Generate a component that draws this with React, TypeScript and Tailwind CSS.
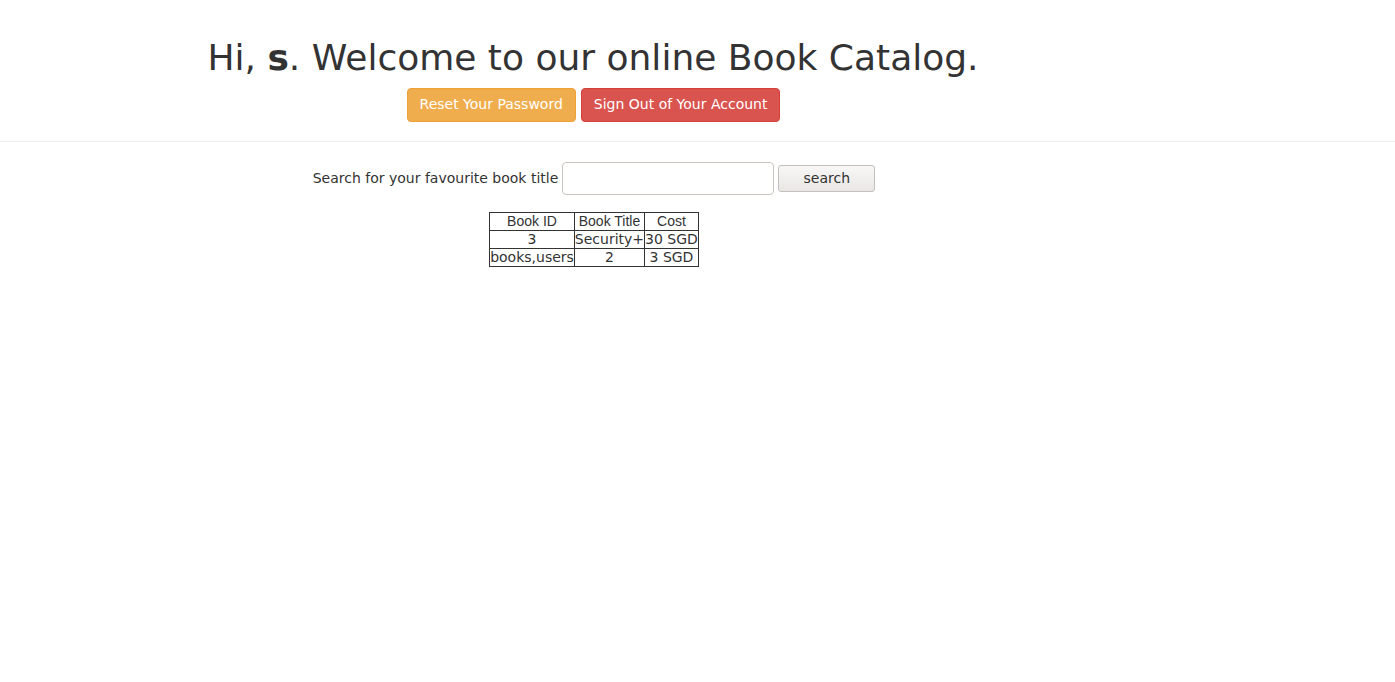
import React from "react";

export default function App() {
  const dv = { fontFamily: '"DejaVu Sans", sans-serif' };
  const cell = "border border-[#333] p-0 leading-[16px] whitespace-nowrap";
  return (
    <div className="min-h-[682px] bg-white text-[#333]" style={dv}>
      <div className="w-[1186px] text-center">
        <h1 className="pt-[38px] text-[36px] leading-[39.6px] font-normal">
          Hi, <b className="font-bold">s</b>. Welcome to our online Book Catalog.
        </h1>
        <div className="mt-[10px] flex justify-center gap-[5px] pl-[1px]">
          <button className="h-[34px] px-[12px] pb-[2px] rounded-[4px] border border-[#eea236] bg-[#f0ad4e] text-white text-[14px] leading-[20px]">
            Reset Your Password
          </button>
          <button className="h-[34px] px-[12px] pb-[2px] rounded-[4px] border border-[#d43f3a] bg-[#d9534f] text-white text-[14px] leading-[20px]">
            Sign Out of Your Account
          </button>
        </div>
      </div>
      <hr className="mt-[19px] border-0 border-t border-[#eee]" />
      <div className="w-[1188px]">
        <div className="mt-[20px] flex justify-center items-center gap-[4px]">
          <span className="text-[14px]">Search for your favourite book title</span>
          <input className="w-[212px] h-[33px] rounded-[4px] border border-[#c9c4be] outline-none" />
          <button className="w-[97px] h-[27px] rounded-[3px] border border-[#c4c0bb] bg-gradient-to-b from-[#f8f7f6] to-[#e9e7e4] text-[14px] text-[#333]">
            search
          </button>
        </div>
        <div className="mt-[17px] flex justify-center">
          <table className="border-collapse border border-[#333] text-[14px] text-center">
            <thead>
              <tr className="h-[18px]" style={{ fontFamily: '"Liberation Sans", Arial, sans-serif' }}>
                <th className={cell + " font-normal"}>Book ID</th>
                <th className={cell + " font-normal"}>Book Title</th>
                <th className={cell + " font-normal"}>Cost</th>
              </tr>
            </thead>
            <tbody>
              <tr className="h-[18px]">
                <td className={cell}>3</td>
                <td className={cell}>Security+</td>
                <td className={cell}>30 SGD</td>
              </tr>
              <tr className="h-[18px]">
                <td className={cell}>books,users</td>
                <td className={cell}>2</td>
                <td className={cell}>3 SGD</td>
              </tr>
            </tbody>
          </table>
        </div>
      </div>
    </div>
  );
}
